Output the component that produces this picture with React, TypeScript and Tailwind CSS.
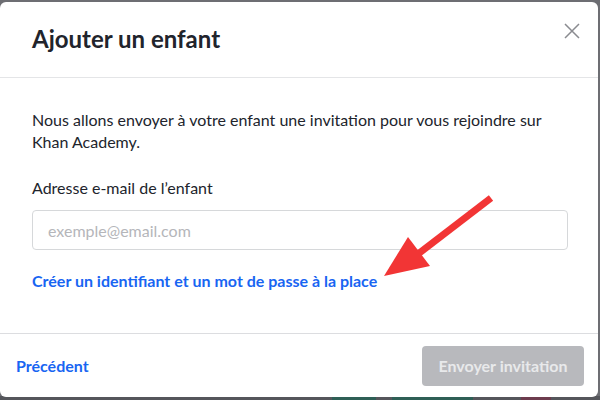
export default function App() {
  return (
    <div className="relative w-[600px] h-[400px] overflow-hidden bg-[#6d6e73] pt-[2px] font-['Lato','Liberation_Sans',sans-serif]">
      {/* dimmed page behind the modal */}
      <div className="absolute left-0 right-0 bottom-0 h-[4px] flex bg-[#55565b]">
        <div className="w-[332px]" />
        <div className="w-[44px] bg-[#2f5f56]" />
        <div className="w-[16px]" />
        <div className="w-[81px] bg-[#2f5f56]" />
        <div className="w-[48px]" />
        <div className="w-[30px] bg-[#6d3c4e]" />
      </div>

      <div className="relative w-[598px] h-[395px] bg-white rounded-[6px] flex flex-col text-[#21242c]">
        {/* Header */}
        <div className="h-[76px] flex items-center justify-between pl-[32px] pr-[14px] border-b border-[#e4e5e7]">
          <h1 className="text-[24px] font-bold leading-none pb-[2px]">Ajouter un enfant</h1>
          <button className="w-[24px] h-[24px] flex items-center justify-center text-[#8a8b90] -mt-[18px]">
            <svg width="16" height="16" viewBox="0 0 16 16" fill="none" stroke="currentColor" strokeWidth="1.5">
              <path d="M1 1L15 15M15 1L1 15" />
            </svg>
          </button>
        </div>

        {/* Body */}
        <div className="flex-1 pl-[32px] pr-[30px] pt-[31px]">
          <p className="text-[16px] leading-[22px]">
            Nous allons envoyer à votre enfant une invitation pour vous rejoindre sur Khan Academy.
          </p>
          <label className="block mt-[24px] text-[16px] leading-[22px]">Adresse e-mail de l’enfant</label>
          <input
            className="mt-[11px] w-full h-[40px] rounded-[4px] border border-[#d6d8da] px-[15px] text-[16px] placeholder:text-[#b5b6ba] outline-none"
            placeholder="exemple@email.com"
          />
          <a className="block mt-[20px] text-[16px] leading-[22px] font-bold text-[#1865f2]">
            Créer un identifiant et un mot de passe à la place
          </a>
        </div>

        {/* Footer */}
        <div className="h-[64px] flex items-center justify-between pl-[16px] pr-[14px] border-t border-[#dcdde0]">
          <a className="text-[16px] font-bold text-[#1865f2]">Précédent</a>
          <button className="h-[40px] w-[162px] rounded-[4px] bg-[#b8b9bd] text-[16px] font-bold text-[#e8e9eb]">
            Envoyer invitation
          </button>
        </div>
      </div>

      {/* red annotation arrow */}
      <svg className="absolute left-0 top-0 pointer-events-none" width="600" height="400">
        <line x1="491" y1="198" x2="418" y2="254" stroke="#f23535" strokeWidth="7" />
        <polygon points="384,276 408,237 430,266" fill="#f23535" />
      </svg>
    </div>
  );
}
